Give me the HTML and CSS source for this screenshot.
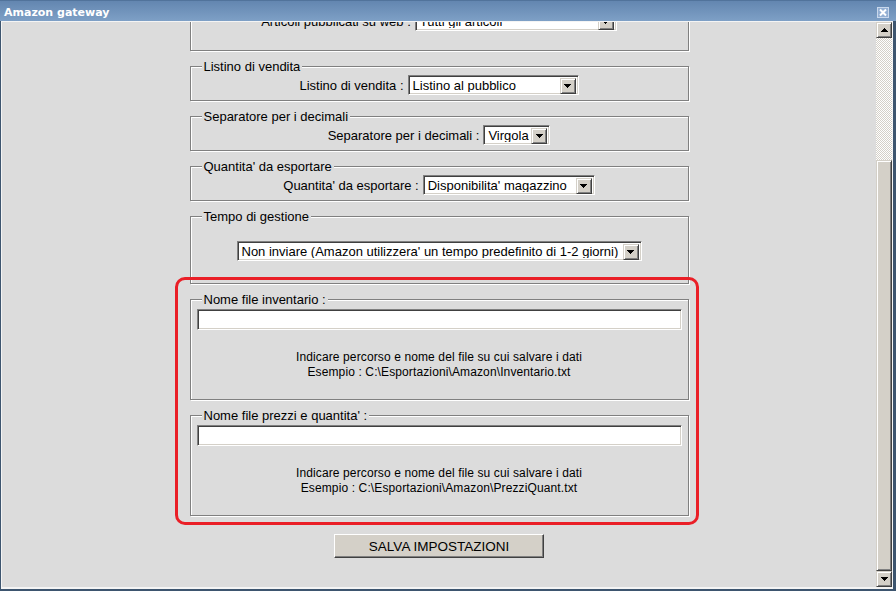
FILE: index.html
```html
<!DOCTYPE html>
<html lang="it">
<head>
<meta charset="utf-8">
<title>Amazon gateway</title>
<link rel="stylesheet" href="styles.css">
</head>
<body>
<div class="window">
  <div class="titlebar">
    <span class="title">Amazon gateway</span>
    <span class="close"><svg width="12" height="11" viewBox="0 0 12 11"><rect x="0.5" y="0.5" width="11" height="10" fill="#93afd3" stroke="#c9d8ec"/><path d="M3 2.5l6 6M9 2.5l-6 6" stroke="#fff" stroke-width="2"/></svg></span>
  </div>
  <div class="client">
    <div class="frame">
      <div class="viewport">
        <div class="page">
          <div class="group g-top">
            <div class="legend">Articoli pubblicati su web</div>
            <div class="row">
              <span class="lbl">Articoli pubblicati su web :</span>
              <div class="select w-web"><span class="val">Tutti gli articoli</span><span class="drop"><svg width="7" height="4" viewBox="0 0 7 4" shape-rendering="crispEdges"><path d="M0 0h7v1h-1v1h-1v1h-1v1h-1v-1h-1v-1h-1v-1h-1z"/></svg></span></div>
            </div>
          </div>
          <div class="group">
            <div class="legend">Listino di vendita</div>
            <div class="row">
              <span class="lbl">Listino di vendita :</span>
              <div class="select w-listino"><span class="val">Listino al pubblico</span><span class="drop"><svg width="7" height="4" viewBox="0 0 7 4" shape-rendering="crispEdges"><path d="M0 0h7v1h-1v1h-1v1h-1v1h-1v-1h-1v-1h-1v-1h-1z"/></svg></span></div>
            </div>
          </div>
          <div class="group">
            <div class="legend">Separatore per i decimali</div>
            <div class="row">
              <span class="lbl">Separatore per i decimali :</span>
              <div class="select w-sep"><span class="val">Virgola</span><span class="drop"><svg width="7" height="4" viewBox="0 0 7 4" shape-rendering="crispEdges"><path d="M0 0h7v1h-1v1h-1v1h-1v1h-1v-1h-1v-1h-1v-1h-1z"/></svg></span></div>
            </div>
          </div>
          <div class="group">
            <div class="legend">Quantita' da esportare</div>
            <div class="row">
              <span class="lbl">Quantita' da esportare :</span>
              <div class="select w-qta"><span class="val">Disponibilita' magazzino</span><span class="drop"><svg width="7" height="4" viewBox="0 0 7 4" shape-rendering="crispEdges"><path d="M0 0h7v1h-1v1h-1v1h-1v1h-1v-1h-1v-1h-1v-1h-1z"/></svg></span></div>
            </div>
          </div>
          <div class="group g-tempo">
            <div class="legend">Tempo di gestione</div>
            <div class="row row-tempo">
              <div class="select w-tempo"><span class="val">Non inviare (Amazon utilizzera' un tempo predefinito di 1-2 giorni)</span><span class="drop"><svg width="7" height="4" viewBox="0 0 7 4" shape-rendering="crispEdges"><path d="M0 0h7v1h-1v1h-1v1h-1v1h-1v-1h-1v-1h-1v-1h-1z"/></svg></span></div>
            </div>
          </div>
          <div class="group g-file">
            <div class="legend">Nome file inventario :</div>
            <div class="input"></div>
            <div class="hint">Indicare percorso e nome del file su cui salvare i dati<br>Esempio : C:\Esportazioni\Amazon\Inventario.txt</div>
          </div>
          <div class="group g-file">
            <div class="legend">Nome file prezzi e quantita' :</div>
            <div class="input"></div>
            <div class="hint">Indicare percorso e nome del file su cui salvare i dati<br>Esempio : C:\Esportazioni\Amazon\PrezziQuant.txt</div>
          </div>
          <button class="btn" type="button">SALVA IMPOSTAZIONI</button>
          <div class="highlight"></div>
        </div>
      </div>
      <div class="scrollbar">
        <div class="sb-btn"><svg width="7" height="4" viewBox="0 0 7 4" shape-rendering="crispEdges"><path d="M3 0h1v1h1v1h1v1h1v1h-7v-1h1v-1h1v-1h1z"/></svg></div>
        <div class="sb-track"></div>
        <div class="sb-thumb"></div>
        <div class="sb-btn"><svg width="7" height="4" viewBox="0 0 7 4" shape-rendering="crispEdges"><path d="M0 0h7v1h-1v1h-1v1h-1v1h-1v-1h-1v-1h-1v-1h-1z"/></svg></div>
      </div>
    </div>
  </div>
</div>
</body>
</html>
```
FILE: styles.css
```css
* { box-sizing: border-box; }
html, body { margin: 0; padding: 0; }
body {
  width: 896px;
  height: 591px;
  overflow: hidden;
  background: #dcdcdc;
  font-family: "Liberation Sans", Arial, sans-serif;
  font-size: 13px;
  color: #000;
}
.window {
  width: 896px;
  height: 591px;
  display: flex;
  flex-direction: column;
}
.titlebar {
  flex: none;
  height: 21px;
  display: flex;
  justify-content: space-between;
  align-items: flex-start;
  background: linear-gradient(#6386b0, #7ea0c6);
  border-top: 1px solid #51739b;
  padding: 4px 7px 0 4px;
}
.title {
  font: bold 11px/16px "DejaVu Sans", Verdana, sans-serif;
  color: #fff;
}
.close {
  display: block;
  width: 12px;
  height: 11px;
  margin-top: 2px;
}
.close svg { display: block; }
.client {
  flex: 1;
  display: flex;
  border-style: solid;
  border-color: #3d556f;
  border-width: 0 3px 2px 1px;
}
.frame {
  flex: 1;
  display: flex;
  border-style: solid;
  border-color: #f4f4f4;
  border-width: 1px 1px 2px 1px;
}
.viewport {
  flex: 1;
  overflow: hidden;
  background: #dcdcdc;
}
.page {
  position: relative;
  width: 499px;
  margin: -20px auto 0;
}
.group {
  border: 1px solid #808080;
  box-shadow: 1px 1px 0 #fff, inset 1px 1px 0 #fff;
  padding: 0 6px 5px;
  margin-bottom: 15px;
}
.g-top { padding-bottom: 19px; }
.g-tempo { padding-bottom: 22px; }
.g-file { padding-bottom: 19px; }
.legend {
  display: table;
  margin: -8px 0 0 5px;
  padding: 0 2px;
  background: #dcdcdc;
  line-height: 15px;
}
.row {
  display: flex;
  justify-content: center;
  align-items: center;
  gap: 4px;
  height: 20px;
  margin-top: 1px;
}
.row-tempo { margin-top: 17px; }
.lbl { white-space: nowrap; }
.select {
  display: flex;
  height: 20px;
  background: #fff;
  border: 1px solid;
  border-color: #808080 #fff #fff #808080;
  box-shadow: inset 1px 1px 0 #404040, inset -1px -1px 0 #d4d0c8;
  padding: 2px;
}
.val {
  flex: 1;
  min-width: 0;
  padding-left: 2px;
  line-height: 15px;
  white-space: nowrap;
  overflow: hidden;
}
.drop, .sb-btn {
  display: flex;
  align-items: center;
  justify-content: center;
  background: #d4d0c8;
  border: 1px solid;
  border-color: #d4d0c8 #404040 #404040 #d4d0c8;
  box-shadow: inset 1px 1px 0 #fff, inset -1px -1px 0 #808080;
}
.drop { flex: none; width: 16px; height: 16px; }
.drop svg, .sb-btn svg { display: block; }
.w-web { width: 202px; }
.w-listino { width: 171px; }
.w-sep { width: 67px; }
.w-qta { width: 172px; }
.w-tempo { width: 405px; }
.input {
  height: 21px;
  margin-top: 2px;
  background: #fff;
  border: 1px solid;
  border-color: #808080 #fff #fff #808080;
  box-shadow: inset 1px 1px 0 #404040, inset -1px -1px 0 #d4d0c8;
}
.hint {
  margin-top: 20px;
  text-align: center;
  font-size: 12px;
  letter-spacing: 0.12px;
  line-height: 15px;
}
.btn {
  display: block;
  width: 210px;
  height: 24px;
  margin: 18px auto 0;
  padding: 0;
  background: #d4d0c8;
  border: 1px solid;
  border-color: #fff #404040 #404040 #fff;
  box-shadow: inset -1px -1px 0 #808080;
  font-family: "Liberation Sans", Arial, sans-serif;
  font-size: 13.5px;
  color: #000;
}
.highlight {
  position: absolute;
  left: -15px;
  top: 275px;
  width: 524px;
  height: 248px;
  border: 3px solid #ea1f27;
  border-radius: 10px;
  pointer-events: none;
}
.scrollbar {
  flex: none;
  width: 16px;
  display: flex;
  flex-direction: column;
}
.sb-btn { flex: none; height: 16px; }
.sb-track {
  flex: none;
  height: 122px;
  background: repeating-conic-gradient(#fff 0 25%, #d4d0c8 0 50%) 0 0 / 2px 2px;
}
.sb-thumb {
  flex: 1;
  background: #d4d0c8;
  border: 1px solid;
  border-color: #d4d0c8 #404040 #404040 #d4d0c8;
  box-shadow: inset 1px 1px 0 #fff, inset -1px -1px 0 #808080;
}
```
